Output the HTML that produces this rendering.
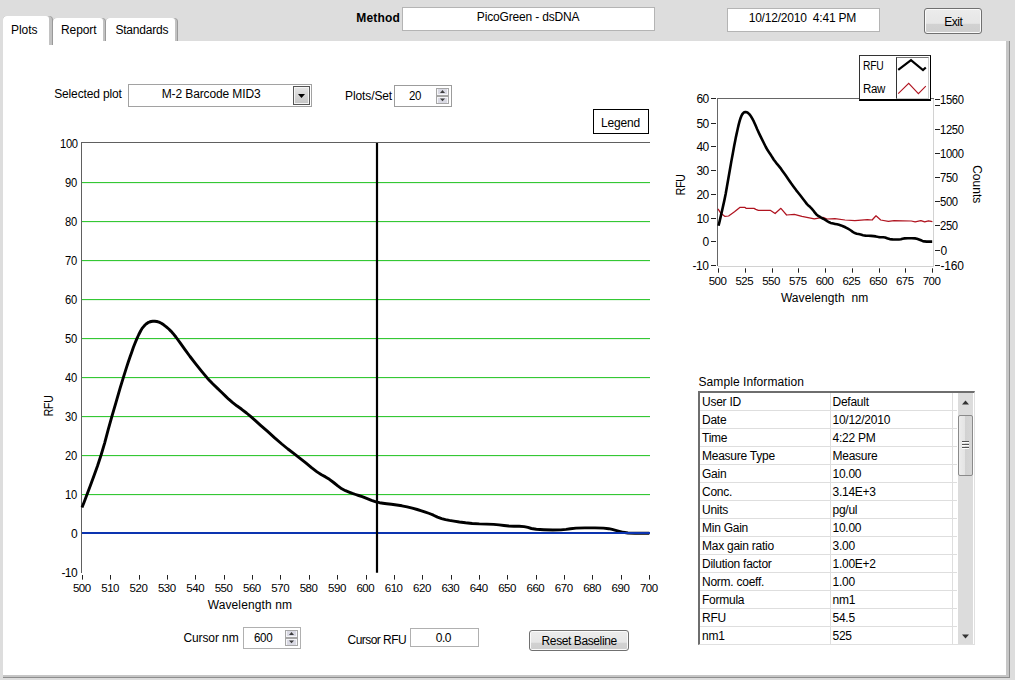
<!DOCTYPE html>
<html><head><meta charset="utf-8"><title>PicoGreen - dsDNA</title>
<style>
html,body{margin:0;padding:0}
body{width:1015px;height:680px;overflow:hidden;background:#dddddd;position:relative;font-family:"Liberation Sans", sans-serif;font-size:12px;color:#000}
.t{position:absolute;white-space:pre;line-height:1;font-family:"Liberation Sans", sans-serif}
.abs{position:absolute;box-sizing:border-box}
.fld{position:absolute;box-sizing:border-box;background:#fff;border:1px solid #a0a0a0}
.btn{position:absolute;box-sizing:border-box;border:1px solid #707070;border-radius:3px;box-shadow:inset 0 0 0 1px #fafafa;background:linear-gradient(180deg,#ececec 0%,#e6e6e6 60%,#d2d2d2 62%,#cecece 100%)}
</style></head><body>
<!-- panel shadow + panel -->
<div class="abs" style="left:3px;top:41px;width:1007px;height:637px;background:#8e8e8e"></div>
<div class="abs" style="left:3px;top:41px;width:1006px;height:636px;background:#c6c6c6"></div>
<div class="abs" style="left:3px;top:41px;width:1003px;height:634px;background:#fff"></div>
<!-- tabs -->
<div class="abs" style="left:3px;top:16px;width:50px;height:29px;background:#9a9a9a;border-radius:4px 4px 0 0"></div>
<div class="abs" style="left:3px;top:16px;width:49px;height:29px;background:#c2c2c2;border-radius:4px 4px 0 0"></div>
<div class="abs" style="left:3px;top:16px;width:46px;height:30px;background:#fff;border-radius:4px 3px 0 0"></div>
<div class="abs" style="left:53px;top:18px;width:53px;height:23px;background:#9a9a9a;border-radius:4px 4px 0 0"></div>
<div class="abs" style="left:53px;top:18px;width:52px;height:23px;background:#c2c2c2;border-radius:4px 4px 0 0"></div>
<div class="abs" style="left:53px;top:18px;width:50px;height:23px;background:#fff;border-radius:4px 3px 0 0"></div>
<div class="abs" style="left:106px;top:18px;width:71.5px;height:23px;background:#9a9a9a;border-radius:4px 4px 0 0"></div>
<div class="abs" style="left:106px;top:18px;width:70.5px;height:23px;background:#c2c2c2;border-radius:4px 4px 0 0"></div>
<div class="abs" style="left:106px;top:18px;width:68.5px;height:23px;background:#fff;border-radius:4px 3px 0 0"></div>
<!-- header fields -->
<div class="fld" style="left:402px;top:7px;width:253px;height:24px;border-color:#b4b4b4"></div>
<div class="fld" style="left:727px;top:8px;width:153px;height:24px;border-color:#b4b4b4"></div>
<div class="btn" style="left:924px;top:8px;width:58px;height:26px"></div>
<!-- selected plot -->
<div class="fld" style="left:128px;top:84px;width:184px;height:23px;border-color:#a2a2a2"></div>
<div class="abs" style="left:293px;top:86px;width:17px;height:19px;border:1px solid #555;background:linear-gradient(180deg,#e6e6e6,#c4c4c4);box-shadow:inset 0 0 0 1px #f4f4f4"></div>
<svg width="17" height="19" style="position:absolute;left:293px;top:86px"><polygon points="5,8 12,8 8.5,12" fill="#000"/></svg>
<div class="fld" style="left:394px;top:85px;width:58px;height:22px;border-color:#9c9c9c"></div>
<div style="position:absolute;left:436px;top:88px;width:13px;height:16px;box-sizing:border-box;border:1px solid #a6a6a6;background:#f6f6f8"></div>
<div style="position:absolute;left:438px;top:89px;width:9px;height:5px;background:#d9d9e3"></div>
<div style="position:absolute;left:438px;top:98px;width:9px;height:5px;background:#d9d9e3"></div>
<div style="position:absolute;left:436px;top:95px;width:13px;height:2px;background:#a6a6a6"></div>
<svg width="13" height="16" style="position:absolute;left:436px;top:88px"><polygon points="4,5 9,5 6.5,2" fill="#3c3c3c"/><polygon points="4,10.5 9,10.5 6.5,13.3" fill="#3c3c3c"/></svg>
<!-- legend button -->
<div class="abs" style="left:593px;top:109px;width:56px;height:25px;border:1px solid #000;background:#fff"></div>
<!-- bottom controls -->
<div class="fld" style="left:243px;top:627px;width:58px;height:22px;border-color:#b0b0b0"></div>
<div style="position:absolute;left:285px;top:630px;width:13px;height:16px;box-sizing:border-box;border:1px solid #a6a6a6;background:#f6f6f8"></div>
<div style="position:absolute;left:287px;top:631px;width:9px;height:5px;background:#d9d9e3"></div>
<div style="position:absolute;left:287px;top:640px;width:9px;height:5px;background:#d9d9e3"></div>
<div style="position:absolute;left:285px;top:637px;width:13px;height:2px;background:#a6a6a6"></div>
<svg width="13" height="16" style="position:absolute;left:285px;top:630px"><polygon points="4,5 9,5 6.5,2" fill="#3c3c3c"/><polygon points="4,10.5 9,10.5 6.5,13.3" fill="#3c3c3c"/></svg>
<div class="fld" style="left:410px;top:628px;width:69px;height:19px;border-color:#b0b0b0"></div>
<div class="btn" style="left:529px;top:630px;width:100px;height:21px"></div>
<svg width="1015" height="680" viewBox="0 0 1015 680" style="position:absolute;left:0;top:0">
<line x1="82" x2="650" y1="495.5" y2="495.5" stroke="#e6f7e6" stroke-width="1" shape-rendering="crispEdges"/>
<line x1="82" x2="650" y1="494.5" y2="494.5" stroke="#34c834" stroke-width="1" shape-rendering="crispEdges"/>
<line x1="82" x2="650" y1="456.5" y2="456.5" stroke="#e6f7e6" stroke-width="1" shape-rendering="crispEdges"/>
<line x1="82" x2="650" y1="455.5" y2="455.5" stroke="#34c834" stroke-width="1" shape-rendering="crispEdges"/>
<line x1="82" x2="650" y1="417.5" y2="417.5" stroke="#e6f7e6" stroke-width="1" shape-rendering="crispEdges"/>
<line x1="82" x2="650" y1="416.5" y2="416.5" stroke="#34c834" stroke-width="1" shape-rendering="crispEdges"/>
<line x1="82" x2="650" y1="378.5" y2="378.5" stroke="#e6f7e6" stroke-width="1" shape-rendering="crispEdges"/>
<line x1="82" x2="650" y1="377.5" y2="377.5" stroke="#34c834" stroke-width="1" shape-rendering="crispEdges"/>
<line x1="82" x2="650" y1="339.5" y2="339.5" stroke="#e6f7e6" stroke-width="1" shape-rendering="crispEdges"/>
<line x1="82" x2="650" y1="338.5" y2="338.5" stroke="#34c834" stroke-width="1" shape-rendering="crispEdges"/>
<line x1="82" x2="650" y1="300.5" y2="300.5" stroke="#e6f7e6" stroke-width="1" shape-rendering="crispEdges"/>
<line x1="82" x2="650" y1="299.5" y2="299.5" stroke="#34c834" stroke-width="1" shape-rendering="crispEdges"/>
<line x1="82" x2="650" y1="261.5" y2="261.5" stroke="#e6f7e6" stroke-width="1" shape-rendering="crispEdges"/>
<line x1="82" x2="650" y1="260.5" y2="260.5" stroke="#34c834" stroke-width="1" shape-rendering="crispEdges"/>
<line x1="82" x2="650" y1="222.5" y2="222.5" stroke="#e6f7e6" stroke-width="1" shape-rendering="crispEdges"/>
<line x1="82" x2="650" y1="221.5" y2="221.5" stroke="#34c834" stroke-width="1" shape-rendering="crispEdges"/>
<line x1="82" x2="650" y1="183.5" y2="183.5" stroke="#e6f7e6" stroke-width="1" shape-rendering="crispEdges"/>
<line x1="82" x2="650" y1="182.5" y2="182.5" stroke="#34c834" stroke-width="1" shape-rendering="crispEdges"/>
<line x1="81" x2="650" y1="142.5" y2="142.5" stroke="#606060" stroke-width="1" shape-rendering="crispEdges"/>
<line x1="81.5" x2="81.5" y1="142" y2="572.5" stroke="#606060" stroke-width="1" shape-rendering="crispEdges"/>
<line x1="82.5" x2="82.5" y1="575" y2="579.6" stroke="#222" stroke-width="1"/>
<line x1="110.5" x2="110.5" y1="575" y2="579.6" stroke="#222" stroke-width="1"/>
<line x1="139.5" x2="139.5" y1="575" y2="579.6" stroke="#222" stroke-width="1"/>
<line x1="167.5" x2="167.5" y1="575" y2="579.6" stroke="#222" stroke-width="1"/>
<line x1="195.5" x2="195.5" y1="575" y2="579.6" stroke="#222" stroke-width="1"/>
<line x1="224.5" x2="224.5" y1="575" y2="579.6" stroke="#222" stroke-width="1"/>
<line x1="252.5" x2="252.5" y1="575" y2="579.6" stroke="#222" stroke-width="1"/>
<line x1="280.5" x2="280.5" y1="575" y2="579.6" stroke="#222" stroke-width="1"/>
<line x1="309.5" x2="309.5" y1="575" y2="579.6" stroke="#222" stroke-width="1"/>
<line x1="337.5" x2="337.5" y1="575" y2="579.6" stroke="#222" stroke-width="1"/>
<line x1="366.5" x2="366.5" y1="575" y2="579.6" stroke="#222" stroke-width="1"/>
<line x1="394.5" x2="394.5" y1="575" y2="579.6" stroke="#222" stroke-width="1"/>
<line x1="422.5" x2="422.5" y1="575" y2="579.6" stroke="#222" stroke-width="1"/>
<line x1="451.5" x2="451.5" y1="575" y2="579.6" stroke="#222" stroke-width="1"/>
<line x1="479.5" x2="479.5" y1="575" y2="579.6" stroke="#222" stroke-width="1"/>
<line x1="507.5" x2="507.5" y1="575" y2="579.6" stroke="#222" stroke-width="1"/>
<line x1="536.5" x2="536.5" y1="575" y2="579.6" stroke="#222" stroke-width="1"/>
<line x1="564.5" x2="564.5" y1="575" y2="579.6" stroke="#222" stroke-width="1"/>
<line x1="592.5" x2="592.5" y1="575" y2="579.6" stroke="#222" stroke-width="1"/>
<line x1="621.5" x2="621.5" y1="575" y2="579.6" stroke="#222" stroke-width="1"/>
<line x1="649.5" x2="649.5" y1="575" y2="579.6" stroke="#222" stroke-width="1"/>
<polyline fill="none" stroke="#000" stroke-width="2.9" stroke-linejoin="round" stroke-linecap="butt" points="82.0,507.5 84.1,502.2 87.0,494.5 90.3,485.8 93.7,476.5 97.4,466.2 101.1,455.0 104.7,442.8 108.2,429.7 111.9,416.4 116.0,402.4 120.1,388.2 123.7,376.3 126.3,368.1 128.2,362.3 130.0,357.0 131.8,351.9 133.4,347.3 135.1,343.0 136.9,338.6 138.8,334.5 140.6,331.0 142.1,328.4 143.6,326.6 145.0,325.0 146.5,323.7 147.9,322.7 149.5,322.0 151.1,321.5 152.8,321.2 154.7,321.2 156.8,321.5 159.0,322.1 161.3,323.2 163.7,324.8 166.3,326.8 168.8,329.0 170.9,331.1 173.0,333.4 175.9,337.0 180.0,342.6 184.8,349.4 190.0,356.5 195.7,363.9 201.9,371.6 207.6,378.4 212.7,383.8 217.5,388.4 221.8,392.5 225.5,396.1 228.7,399.2 232.4,402.4 236.8,405.8 241.7,409.3 246.5,413.0 250.9,416.7 255.4,420.7 260.6,425.3 267.3,431.2 274.7,437.9 281.8,444.0 287.9,449.0 293.7,453.4 299.4,457.8 305.5,462.7 311.5,467.7 317.0,471.9 321.5,474.8 325.5,476.9 329.4,479.3 333.6,482.5 337.8,485.9 341.8,488.8 345.5,490.7 349.0,492.1 352.4,493.4 355.6,494.5 358.7,495.5 362.2,496.7 366.6,498.4 371.5,500.3 376.0,501.8 379.6,502.7 382.9,503.2 386.7,503.7 391.4,504.3 396.7,505.0 401.9,505.8 407.1,506.9 412.3,508.2 417.2,509.5 421.5,510.8 425.4,512.1 429.4,513.5 433.5,515.2 437.5,517.1 441.6,518.6 445.5,519.6 449.4,520.4 453.9,521.1 459.4,522.0 465.6,522.8 472.2,523.5 479.3,523.9 486.8,524.1 493.6,524.4 499.1,524.9 504.0,525.5 508.8,526.0 514.0,526.2 519.2,526.3 524.1,526.6 527.9,527.4 531.4,528.5 536.3,529.3 543.9,529.7 552.9,530.0 560.8,529.9 566.1,529.4 570.4,528.7 576.0,528.1 584.8,527.9 595.0,527.9 603.5,528.1 608.7,528.7 612.2,529.4 615.7,530.3 619.4,531.3 623.2,532.3 627.9,533.0 635.1,533.3 643.4,533.3 649.3,533.3"/>
<line x1="82" x2="650" y1="533" y2="533" stroke="#0c34b0" stroke-width="2" shape-rendering="crispEdges"/>
<line x1="377" x2="377" y1="143" y2="572.7" stroke="#000" stroke-width="2.2"/>
<line x1="717" x2="934" y1="98.5" y2="98.5" stroke="#666" stroke-width="1" shape-rendering="crispEdges"/>
<line x1="717.5" x2="717.5" y1="98" y2="266" stroke="#666" stroke-width="1" shape-rendering="crispEdges"/>
<line x1="718" x2="934" y1="266.5" y2="266.5" stroke="#d2d2d2" stroke-width="1" shape-rendering="crispEdges"/>
<line x1="933.5" x2="933.5" y1="99" y2="267" stroke="#d2d2d2" stroke-width="1" shape-rendering="crispEdges"/>
<line x1="711" x2="716" y1="265.5" y2="265.5" stroke="#222" stroke-width="1"/>
<line x1="711" x2="716" y1="241.5" y2="241.5" stroke="#222" stroke-width="1"/>
<line x1="711" x2="716" y1="218.5" y2="218.5" stroke="#222" stroke-width="1"/>
<line x1="711" x2="716" y1="194.5" y2="194.5" stroke="#222" stroke-width="1"/>
<line x1="711" x2="716" y1="170.5" y2="170.5" stroke="#222" stroke-width="1"/>
<line x1="711" x2="716" y1="146.5" y2="146.5" stroke="#222" stroke-width="1"/>
<line x1="711" x2="716" y1="123.5" y2="123.5" stroke="#222" stroke-width="1"/>
<line x1="711" x2="716" y1="98.5" y2="98.5" stroke="#222" stroke-width="1"/>
<line x1="935" x2="940" y1="99.5" y2="99.5" stroke="#222" stroke-width="1"/>
<line x1="935" x2="940" y1="129.5" y2="129.5" stroke="#222" stroke-width="1"/>
<line x1="935" x2="940" y1="153.5" y2="153.5" stroke="#222" stroke-width="1"/>
<line x1="935" x2="940" y1="177.5" y2="177.5" stroke="#222" stroke-width="1"/>
<line x1="935" x2="940" y1="201.5" y2="201.5" stroke="#222" stroke-width="1"/>
<line x1="935" x2="940" y1="225.5" y2="225.5" stroke="#222" stroke-width="1"/>
<line x1="935" x2="940" y1="250.5" y2="250.5" stroke="#222" stroke-width="1"/>
<line x1="935" x2="940" y1="265.5" y2="265.5" stroke="#222" stroke-width="1"/>
<line x1="935" x2="940" y1="105.5" y2="105.5" stroke="#222" stroke-width="1"/>
<line x1="718.5" x2="718.5" y1="268.3" y2="272.7" stroke="#222" stroke-width="1"/>
<line x1="745.5" x2="745.5" y1="268.3" y2="272.7" stroke="#222" stroke-width="1"/>
<line x1="772.5" x2="772.5" y1="268.3" y2="272.7" stroke="#222" stroke-width="1"/>
<line x1="798.5" x2="798.5" y1="268.3" y2="272.7" stroke="#222" stroke-width="1"/>
<line x1="825.5" x2="825.5" y1="268.3" y2="272.7" stroke="#222" stroke-width="1"/>
<line x1="852.5" x2="852.5" y1="268.3" y2="272.7" stroke="#222" stroke-width="1"/>
<line x1="879.5" x2="879.5" y1="268.3" y2="272.7" stroke="#222" stroke-width="1"/>
<line x1="905.5" x2="905.5" y1="268.3" y2="272.7" stroke="#222" stroke-width="1"/>
<line x1="932.5" x2="932.5" y1="268.3" y2="272.7" stroke="#222" stroke-width="1"/>
<polyline fill="none" stroke="#b01420" stroke-width="1.25" stroke-linejoin="round" points="718.0,208.9 720.9,213.3 725.0,216.4 728.6,216.0 734.5,211.8 739.8,207.4 745.1,207.4 746.3,208.4 754.0,208.4 755.8,209.4 758.4,210.4 770.6,210.4 775.1,213.5 780.9,208.3 786.6,215.0 794.3,214.4 801.9,216.3 814.3,218.8 822.9,217.3 827.2,219.0 834.9,218.6 845.0,220.0 854.9,220.7 867.4,219.6 872.1,220.0 876.0,215.8 880.7,220.0 888.4,221.4 894.1,220.6 911.3,221.0 915.1,221.9 920.9,220.6 924.7,221.9 928.5,220.8 932.4,221.7"/>
<polyline fill="none" stroke="#000" stroke-width="2.6" stroke-linejoin="round" points="718.5,225.8 719.3,222.6 720.4,217.9 721.6,212.6 722.9,206.9 724.3,200.6 725.7,193.8 727.0,186.3 728.4,178.3 729.8,170.2 731.3,161.6 732.9,153.0 734.2,145.7 735.2,140.7 735.9,137.1 736.6,133.9 737.3,130.8 737.9,128.0 738.5,125.4 739.2,122.7 739.9,120.2 740.6,118.0 741.2,116.5 741.7,115.3 742.2,114.4 742.8,113.6 743.3,113.0 743.9,112.5 744.5,112.2 745.2,112.0 745.9,112.1 746.7,112.2 747.5,112.6 748.4,113.3 749.3,114.2 750.3,115.4 751.2,116.8 752.0,118.1 752.8,119.5 753.9,121.7 755.4,125.1 757.2,129.3 759.2,133.6 761.4,138.1 763.7,142.8 765.8,147.0 767.7,150.3 769.5,153.1 771.2,155.6 772.6,157.8 773.8,159.7 775.2,161.6 776.8,163.7 778.7,165.9 780.5,168.1 782.1,170.4 783.8,172.8 785.8,175.6 788.3,179.2 791.1,183.3 793.8,187.0 796.1,190.1 798.2,192.7 800.4,195.5 802.7,198.5 805.0,201.5 807.0,204.1 808.7,205.8 810.2,207.1 811.7,208.6 813.3,210.5 814.9,212.6 816.4,214.4 817.8,215.6 819.1,216.4 820.4,217.2 821.6,217.9 822.7,218.5 824.1,219.2 825.7,220.2 827.6,221.4 829.3,222.3 830.6,222.9 831.9,223.2 833.3,223.5 835.1,223.9 837.1,224.3 839.0,224.8 841.0,225.4 843.0,226.2 844.8,227.0 846.4,227.8 847.9,228.6 849.4,229.5 850.9,230.5 852.4,231.6 854.0,232.6 855.4,233.2 856.9,233.7 858.6,234.1 860.7,234.6 863.0,235.2 865.5,235.6 868.2,235.8 871.0,235.9 873.6,236.1 875.7,236.4 877.5,236.8 879.3,237.1 881.3,237.2 883.2,237.3 885.1,237.5 886.5,238.0 887.8,238.6 889.7,239.1 892.5,239.4 895.9,239.5 898.9,239.5 900.9,239.2 902.5,238.7 904.6,238.4 907.9,238.3 911.8,238.2 915.0,238.4 916.9,238.7 918.3,239.2 919.6,239.7 921.0,240.3 922.4,240.9 924.2,241.4 926.9,241.6 930.0,241.6 932.2,241.6"/>
</svg>

<div style="position:absolute;left:859px;top:55px;width:72px;height:46px;background:#fff;box-sizing:border-box;border:1px solid #333;border-right:1px solid #000;border-bottom:2px solid #000"></div>
<div style="position:absolute;left:896px;top:57px;width:33px;height:42px;background:#fff;box-sizing:border-box;border-left:1px solid #333;border-top:1px solid #777;border-right:1px solid #ccc;border-bottom:1px solid #ccc"></div>
<svg width="40" height="50" viewBox="890 55 40 50" style="position:absolute;left:890px;top:55px">
<polyline fill="none" stroke="#000" stroke-width="2.2" points="898.2,69.9 911,60.2 923,70.1 925.8,67.5"/>
<polyline fill="none" stroke="#b01420" stroke-width="1.1" points="898.2,93.7 908.7,83.4 918.4,93.7 925.8,86.2"/>
</svg>

<div style="position:absolute;left:698px;top:391px;width:277px;height:254px;box-sizing:border-box;background:#fff;border-top:2px solid #6e6e6e;border-left:2px solid #6e6e6e;border-right:1px solid #e0e0e0;border-bottom:1px solid #e0e0e0"></div>
<div style="position:absolute;left:700px;top:410px;width:257px;height:1px;background:#dedede"></div>
<div style="position:absolute;left:700px;top:428px;width:257px;height:1px;background:#dedede"></div>
<div style="position:absolute;left:700px;top:446px;width:257px;height:1px;background:#dedede"></div>
<div style="position:absolute;left:700px;top:464px;width:257px;height:1px;background:#dedede"></div>
<div style="position:absolute;left:700px;top:482px;width:257px;height:1px;background:#dedede"></div>
<div style="position:absolute;left:700px;top:500px;width:257px;height:1px;background:#dedede"></div>
<div style="position:absolute;left:700px;top:518px;width:257px;height:1px;background:#dedede"></div>
<div style="position:absolute;left:700px;top:536px;width:257px;height:1px;background:#dedede"></div>
<div style="position:absolute;left:700px;top:554px;width:257px;height:1px;background:#dedede"></div>
<div style="position:absolute;left:700px;top:572px;width:257px;height:1px;background:#dedede"></div>
<div style="position:absolute;left:700px;top:590px;width:257px;height:1px;background:#dedede"></div>
<div style="position:absolute;left:700px;top:608px;width:257px;height:1px;background:#dedede"></div>
<div style="position:absolute;left:700px;top:626px;width:257px;height:1px;background:#dedede"></div>
<div style="position:absolute;left:830px;top:393px;width:1px;height:251px;background:#dedede"></div>
<div style="position:absolute;left:952px;top:393px;width:1px;height:251px;background:#dedede"></div>
<div style="position:absolute;left:958px;top:393px;width:15px;height:251px;background:#dcdcdc"></div>
<div style="position:absolute;left:958px;top:415px;width:15px;height:61px;box-sizing:border-box;border:1px solid #8a8a8a;border-radius:2px;background:linear-gradient(90deg,#ececec 0%,#e4e4e4 45%,#d2d2d2 50%,#d6d6d6 100%)"></div>
<div style="position:absolute;left:962px;top:441px;width:7px;height:1px;background:#555"></div>
<div style="position:absolute;left:962px;top:442px;width:7px;height:1px;background:#fff"></div>
<div style="position:absolute;left:962px;top:444px;width:7px;height:1px;background:#555"></div>
<div style="position:absolute;left:962px;top:445px;width:7px;height:1px;background:#fff"></div>
<div style="position:absolute;left:962px;top:447px;width:7px;height:1px;background:#555"></div>
<div style="position:absolute;left:962px;top:448px;width:7px;height:1px;background:#fff"></div>
<svg width="15" height="10" style="position:absolute;left:958px;top:397px"><polygon points="4,7.5 11,7.5 7.5,3.5" fill="#333"/></svg>
<svg width="15" height="10" style="position:absolute;left:958px;top:631px"><polygon points="4,3.5 11,3.5 7.5,7.5" fill="#333"/></svg>
<span class="t" id="t0" style="font-size:12px;letter-spacing:-0.077px;color:#000;left:11.10px;top:24.00px;">Plots</span>
<span class="t" id="t1" style="font-size:12px;letter-spacing:-0.105px;color:#000;left:61.00px;top:24.00px;">Report</span>
<span class="t" id="t2" style="font-size:12px;letter-spacing:-0.189px;color:#000;left:115.40px;top:24.00px;">Standards</span>
<span class="t" id="t3" style="font-size:12px;letter-spacing:0.191px;color:#000;font-weight:bold;left:356.30px;top:12.00px;">Method</span>
<span class="t" id="t4" style="font-size:12px;letter-spacing:-0.169px;color:#000;left:476.80px;top:11.00px;">PicoGreen - dsDNA</span>
<span class="t" id="t5" style="font-size:12px;letter-spacing:-0.212px;color:#000;left:748.70px;top:12.00px;">10/12/2010&nbsp; 4:41 PM</span>
<span class="t" id="t6" style="font-size:12px;letter-spacing:-0.429px;color:#000;left:944.20px;top:16.00px;">Exit</span>
<span class="t" id="t7" style="font-size:12px;letter-spacing:-0.145px;color:#000;left:54.20px;top:88.00px;">Selected plot</span>
<span class="t" id="t8" style="font-size:12px;letter-spacing:-0.113px;color:#000;left:161.70px;top:88.00px;">M-2 Barcode MID3</span>
<span class="t" id="t9" style="font-size:12px;letter-spacing:-0.103px;color:#000;left:345.00px;top:90.00px;">Plots/Set</span>
<span class="t" id="t10" style="font-size:12px;letter-spacing:-0.350px;color:#000;left:408.60px;top:90.00px;transform-origin:0 0;transform:scaleX(0.9558);">20</span>
<span class="t" id="t11" style="font-size:12px;letter-spacing:-0.208px;color:#000;left:601.10px;top:117.00px;">Legend</span>
<span class="t" id="t12" style="font-size:12px;letter-spacing:0.112px;color:#000;left:207.70px;top:599.00px;">Wavelength nm</span>
<span class="t" id="t13" style="font-size:12px;letter-spacing:-0.091px;color:#000;left:183.40px;top:632.00px;">Cursor nm</span>
<span class="t" id="t14" style="font-size:12px;letter-spacing:-0.350px;color:#000;left:254.40px;top:632.00px;transform-origin:0 0;transform:scaleX(0.9641);">600</span>
<span class="t" id="t15" style="font-size:12px;letter-spacing:-0.532px;color:#000;left:347.50px;top:634.00px;">Cursor RFU</span>
<span class="t" id="t16" style="font-size:12px;letter-spacing:-0.496px;color:#000;left:435.80px;top:632.00px;">0.0</span>
<span class="t" id="t17" style="font-size:12px;letter-spacing:-0.401px;color:#000;left:541.60px;top:635.00px;">Reset Baseline</span>
<span class="t" id="t18" style="font-size:12px;letter-spacing:-0.350px;color:#000;left:863.00px;top:60.00px;transform-origin:0 0;transform:scaleX(0.8594);">RFU</span>
<span class="t" id="t19" style="font-size:12px;letter-spacing:-0.350px;color:#000;left:863.00px;top:83.00px;transform-origin:0 0;transform:scaleX(0.9580);">Raw</span>
<span class="t" id="t20" style="font-size:12px;letter-spacing:0.088px;color:#000;left:780.90px;top:292.00px;">Wavelength&nbsp; nm</span>
<span class="t" id="t21" style="font-size:12px;letter-spacing:0.074px;color:#000;left:698.50px;top:376.00px;">Sample Information</span>
<span class="t" id="t22" style="font-size:12px;letter-spacing:-0.515px;color:#000;left:61.40px;top:567.00px;">-10</span>
<span class="t" id="t23" style="font-size:12px;letter-spacing:-0.388px;color:#000;left:70.90px;top:528.00px;">0</span>
<span class="t" id="t24" style="font-size:12px;letter-spacing:-0.350px;color:#000;left:65.40px;top:489.00px;transform-origin:0 0;transform:scaleX(0.9321);">10</span>
<span class="t" id="t25" style="font-size:12px;letter-spacing:-0.350px;color:#000;left:65.40px;top:450.00px;transform-origin:0 0;transform:scaleX(0.9321);">20</span>
<span class="t" id="t26" style="font-size:12px;letter-spacing:-0.350px;color:#000;left:65.40px;top:411.00px;transform-origin:0 0;transform:scaleX(0.9321);">30</span>
<span class="t" id="t27" style="font-size:12px;letter-spacing:-0.350px;color:#000;left:65.40px;top:372.00px;transform-origin:0 0;transform:scaleX(0.9321);">40</span>
<span class="t" id="t28" style="font-size:12px;letter-spacing:-0.350px;color:#000;left:65.40px;top:333.00px;transform-origin:0 0;transform:scaleX(0.9321);">50</span>
<span class="t" id="t29" style="font-size:12px;letter-spacing:-0.350px;color:#000;left:65.40px;top:294.00px;transform-origin:0 0;transform:scaleX(0.9321);">60</span>
<span class="t" id="t30" style="font-size:12px;letter-spacing:-0.350px;color:#000;left:65.40px;top:255.00px;transform-origin:0 0;transform:scaleX(0.9321);">70</span>
<span class="t" id="t31" style="font-size:12px;letter-spacing:-0.350px;color:#000;left:65.40px;top:216.00px;transform-origin:0 0;transform:scaleX(0.9321);">80</span>
<span class="t" id="t32" style="font-size:12px;letter-spacing:-0.350px;color:#000;left:65.40px;top:177.00px;transform-origin:0 0;transform:scaleX(0.9321);">90</span>
<span class="t" id="t33" style="font-size:12px;letter-spacing:-0.350px;color:#000;left:59.50px;top:138.00px;transform-origin:0 0;transform:scaleX(0.9325);">100</span>
<span class="t" id="t34" style="font-size:11.5px;letter-spacing:-0.462px;color:#000;left:72.90px;top:583.20px;">500</span>
<span class="t" id="t35" style="font-size:11.5px;letter-spacing:-0.462px;color:#000;left:101.25px;top:583.20px;">510</span>
<span class="t" id="t36" style="font-size:11.5px;letter-spacing:-0.462px;color:#000;left:129.60px;top:583.20px;">520</span>
<span class="t" id="t37" style="font-size:11.5px;letter-spacing:-0.462px;color:#000;left:157.95px;top:583.20px;">530</span>
<span class="t" id="t38" style="font-size:11.5px;letter-spacing:-0.462px;color:#000;left:186.30px;top:583.20px;">540</span>
<span class="t" id="t39" style="font-size:11.5px;letter-spacing:-0.462px;color:#000;left:214.65px;top:583.20px;">550</span>
<span class="t" id="t40" style="font-size:11.5px;letter-spacing:-0.463px;color:#000;left:243.00px;top:583.20px;">560</span>
<span class="t" id="t41" style="font-size:11.5px;letter-spacing:-0.463px;color:#000;left:271.35px;top:583.20px;">570</span>
<span class="t" id="t42" style="font-size:11.5px;letter-spacing:-0.463px;color:#000;left:299.70px;top:583.20px;">580</span>
<span class="t" id="t43" style="font-size:11.5px;letter-spacing:-0.463px;color:#000;left:328.05px;top:583.20px;">590</span>
<span class="t" id="t44" style="font-size:11.5px;letter-spacing:-0.463px;color:#000;left:356.40px;top:583.20px;">600</span>
<span class="t" id="t45" style="font-size:11.5px;letter-spacing:-0.463px;color:#000;left:384.75px;top:583.20px;">610</span>
<span class="t" id="t46" style="font-size:11.5px;letter-spacing:-0.463px;color:#000;left:413.10px;top:583.20px;">620</span>
<span class="t" id="t47" style="font-size:11.5px;letter-spacing:-0.463px;color:#000;left:441.45px;top:583.20px;">630</span>
<span class="t" id="t48" style="font-size:11.5px;letter-spacing:-0.463px;color:#000;left:469.80px;top:583.20px;">640</span>
<span class="t" id="t49" style="font-size:11.5px;letter-spacing:-0.463px;color:#000;left:498.15px;top:583.20px;">650</span>
<span class="t" id="t50" style="font-size:11.5px;letter-spacing:-0.463px;color:#000;left:526.50px;top:583.20px;">660</span>
<span class="t" id="t51" style="font-size:11.5px;letter-spacing:-0.463px;color:#000;left:554.85px;top:583.20px;">670</span>
<span class="t" id="t52" style="font-size:11.5px;letter-spacing:-0.463px;color:#000;left:583.20px;top:583.20px;">680</span>
<span class="t" id="t53" style="font-size:11.5px;letter-spacing:-0.463px;color:#000;left:611.55px;top:583.20px;">690</span>
<span class="t" id="t54" style="font-size:11.5px;letter-spacing:-0.463px;color:#000;left:639.90px;top:583.20px;">700</span>
<span class="t" id="t55" style="font-size:12px;letter-spacing:-0.348px;color:#000;left:692.40px;top:260.00px;">-10</span>
<span class="t" id="t56" style="font-size:12px;letter-spacing:-0.388px;color:#000;left:702.40px;top:236.00px;">0</span>
<span class="t" id="t57" style="font-size:12px;letter-spacing:-0.530px;color:#000;left:696.40px;top:213.00px;">10</span>
<span class="t" id="t58" style="font-size:12px;letter-spacing:-0.530px;color:#000;left:696.40px;top:189.00px;">20</span>
<span class="t" id="t59" style="font-size:12px;letter-spacing:-0.530px;color:#000;left:696.40px;top:165.00px;">30</span>
<span class="t" id="t60" style="font-size:12px;letter-spacing:-0.530px;color:#000;left:696.40px;top:141.00px;">40</span>
<span class="t" id="t61" style="font-size:12px;letter-spacing:-0.530px;color:#000;left:696.40px;top:118.00px;">50</span>
<span class="t" id="t62" style="font-size:12px;letter-spacing:-0.530px;color:#000;left:696.40px;top:93.00px;">60</span>
<span class="t" id="t63" style="font-size:11.5px;letter-spacing:-0.463px;color:#000;left:708.70px;top:276.20px;">500</span>
<span class="t" id="t64" style="font-size:11.5px;letter-spacing:-0.463px;color:#000;left:735.45px;top:276.20px;">525</span>
<span class="t" id="t65" style="font-size:11.5px;letter-spacing:-0.463px;color:#000;left:762.20px;top:276.20px;">550</span>
<span class="t" id="t66" style="font-size:11.5px;letter-spacing:-0.463px;color:#000;left:788.95px;top:276.20px;">575</span>
<span class="t" id="t67" style="font-size:11.5px;letter-spacing:-0.463px;color:#000;left:815.70px;top:276.20px;">600</span>
<span class="t" id="t68" style="font-size:11.5px;letter-spacing:-0.463px;color:#000;left:842.45px;top:276.20px;">625</span>
<span class="t" id="t69" style="font-size:11.5px;letter-spacing:-0.463px;color:#000;left:869.20px;top:276.20px;">650</span>
<span class="t" id="t70" style="font-size:11.5px;letter-spacing:-0.463px;color:#000;left:895.95px;top:276.20px;">675</span>
<span class="t" id="t71" style="font-size:11.5px;letter-spacing:-0.463px;color:#000;left:922.70px;top:276.20px;">700</span>
<span class="t" id="t72" style="font-size:12px;letter-spacing:-0.350px;color:#000;left:940.40px;top:94.00px;transform-origin:0 0;transform:scaleX(0.9366);">1560</span>
<span class="t" id="t73" style="font-size:12px;letter-spacing:-0.350px;color:#000;left:940.40px;top:124.00px;transform-origin:0 0;transform:scaleX(0.9366);">1250</span>
<span class="t" id="t74" style="font-size:12px;letter-spacing:-0.350px;color:#000;left:940.40px;top:148.00px;transform-origin:0 0;transform:scaleX(0.9366);">1000</span>
<span class="t" id="t75" style="font-size:12px;letter-spacing:-0.350px;color:#000;left:940.40px;top:172.00px;transform-origin:0 0;transform:scaleX(0.9378);">750</span>
<span class="t" id="t76" style="font-size:12px;letter-spacing:-0.350px;color:#000;left:940.40px;top:196.00px;transform-origin:0 0;transform:scaleX(0.9378);">500</span>
<span class="t" id="t77" style="font-size:12px;letter-spacing:-0.350px;color:#000;left:940.40px;top:220.00px;transform-origin:0 0;transform:scaleX(0.9378);">250</span>
<span class="t" id="t78" style="font-size:12px;letter-spacing:-0.388px;color:#000;left:940.40px;top:245.00px;">0</span>
<span class="t" id="t79" style="font-size:12px;letter-spacing:-0.183px;color:#000;left:940.40px;top:260.00px;">-160</span>
<span class="t" id="t80" style="font-size:12px;letter-spacing:-0.250px;color:#000;left:702.00px;top:396.00px;">User ID</span>
<span class="t" id="t81" style="font-size:12px;letter-spacing:-0.250px;color:#000;left:832.50px;top:396.00px;">Default</span>
<span class="t" id="t82" style="font-size:12px;letter-spacing:-0.250px;color:#000;left:702.00px;top:414.00px;">Date</span>
<span class="t" id="t83" style="font-size:12px;letter-spacing:-0.250px;color:#000;left:832.50px;top:414.00px;">10/12/2010</span>
<span class="t" id="t84" style="font-size:12px;letter-spacing:-0.250px;color:#000;left:702.00px;top:432.00px;">Time</span>
<span class="t" id="t85" style="font-size:12px;letter-spacing:-0.250px;color:#000;left:832.50px;top:432.00px;">4:22 PM</span>
<span class="t" id="t86" style="font-size:12px;letter-spacing:-0.250px;color:#000;left:702.00px;top:450.00px;">Measure Type</span>
<span class="t" id="t87" style="font-size:12px;letter-spacing:-0.250px;color:#000;left:832.50px;top:450.00px;">Measure</span>
<span class="t" id="t88" style="font-size:12px;letter-spacing:-0.250px;color:#000;left:702.00px;top:468.00px;">Gain</span>
<span class="t" id="t89" style="font-size:12px;letter-spacing:-0.250px;color:#000;left:832.50px;top:468.00px;">10.00</span>
<span class="t" id="t90" style="font-size:12px;letter-spacing:-0.250px;color:#000;left:702.00px;top:486.00px;">Conc.</span>
<span class="t" id="t91" style="font-size:12px;letter-spacing:-0.250px;color:#000;left:832.50px;top:486.00px;">3.14E+3</span>
<span class="t" id="t92" style="font-size:12px;letter-spacing:-0.250px;color:#000;left:702.00px;top:504.00px;">Units</span>
<span class="t" id="t93" style="font-size:12px;letter-spacing:-0.250px;color:#000;left:832.50px;top:504.00px;">pg/ul</span>
<span class="t" id="t94" style="font-size:12px;letter-spacing:-0.250px;color:#000;left:702.00px;top:522.00px;">Min Gain</span>
<span class="t" id="t95" style="font-size:12px;letter-spacing:-0.250px;color:#000;left:832.50px;top:522.00px;">10.00</span>
<span class="t" id="t96" style="font-size:12px;letter-spacing:-0.250px;color:#000;left:702.00px;top:540.00px;">Max gain ratio</span>
<span class="t" id="t97" style="font-size:12px;letter-spacing:-0.250px;color:#000;left:832.50px;top:540.00px;">3.00</span>
<span class="t" id="t98" style="font-size:12px;letter-spacing:-0.250px;color:#000;left:702.00px;top:558.00px;">Dilution factor</span>
<span class="t" id="t99" style="font-size:12px;letter-spacing:-0.250px;color:#000;left:832.50px;top:558.00px;">1.00E+2</span>
<span class="t" id="t100" style="font-size:12px;letter-spacing:-0.250px;color:#000;left:702.00px;top:576.00px;">Norm. coeff.</span>
<span class="t" id="t101" style="font-size:12px;letter-spacing:-0.250px;color:#000;left:832.50px;top:576.00px;">1.00</span>
<span class="t" id="t102" style="font-size:12px;letter-spacing:-0.250px;color:#000;left:702.00px;top:594.00px;">Formula</span>
<span class="t" id="t103" style="font-size:12px;letter-spacing:-0.250px;color:#000;left:832.50px;top:594.00px;">nm1</span>
<span class="t" id="t104" style="font-size:12px;letter-spacing:-0.250px;color:#000;left:702.00px;top:612.00px;">RFU</span>
<span class="t" id="t105" style="font-size:12px;letter-spacing:-0.250px;color:#000;left:832.50px;top:612.00px;">54.5</span>
<span class="t" id="t106" style="font-size:12px;letter-spacing:-0.250px;color:#000;left:702.00px;top:630.00px;">nm1</span>
<span class="t" id="t107" style="font-size:12px;letter-spacing:-0.250px;color:#000;left:832.50px;top:630.00px;">525</span>
<span class="t" id="t108" style="font-size:12px;letter-spacing:-0.350px;color:#000;left:53.00px;top:406.24px;transform-origin:0 10.16px;transform:rotate(-90deg) scaleX(0.8721);">RFU</span>
<span class="t" id="t109" style="font-size:12px;letter-spacing:-0.350px;color:#000;left:685.00px;top:184.64px;transform-origin:0 10.16px;transform:rotate(-90deg) scaleX(0.8805);">RFU</span>
<span class="t" id="t110" style="font-size:12px;letter-spacing:0.011px;color:#000;left:973.20px;top:154.84px;transform-origin:0 10.16px;transform:rotate(90deg) scaleX(1.0000);">Counts</span>
</body></html>
